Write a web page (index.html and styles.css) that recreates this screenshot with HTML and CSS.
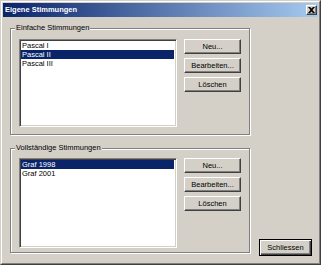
FILE: index.html
```html
<!DOCTYPE html>
<html lang="de">
<head>
<meta charset="utf-8">
<title>Eigene Stimmungen</title>
<link rel="stylesheet" href="styles.css">
</head>
<body>
<div class="window">
  <div class="frame">
    <div class="titlebar">
      <span class="title">Eigene Stimmungen</span>
      <span class="close"><svg width="7" height="6" viewBox="0 0 7 6"><path d="M0 0h2l1.5 1.5L5 0h2L4.5 3 7 6H5L3.5 4.5 2 6H0l2.5-3z" fill="#000"/></svg></span>
    </div>
    <div class="content">
      <div class="groups">
        <div class="group g1">
          <span class="legend">Einfache Stimmungen</span>
          <div class="list l1">
            <div class="item">Pascal I</div>
            <div class="item sel">Pascal II</div>
            <div class="item">Pascal III</div>
          </div>
          <div class="buttons">
            <button class="btn">Neu...</button>
            <button class="btn">Bearbeiten...</button>
            <button class="btn">Löschen</button>
          </div>
        </div>
        <div class="group g2">
          <span class="legend">Vollständige Stimmungen</span>
          <div class="list l2">
            <div class="item sel">Graf 1998</div>
            <div class="item">Graf 2001</div>
          </div>
          <div class="buttons">
            <button class="btn">Neu...</button>
            <button class="btn">Bearbeiten...</button>
            <button class="btn">Löschen</button>
          </div>
        </div>
      </div>
      <div class="footer">
        <button class="btn default">Schliessen</button>
      </div>
    </div>
  </div>
</div>
</body>
</html>
```

FILE: styles.css
```css
html, body {
  margin: 0;
  padding: 0;
  background: #d4d0c8;
  font-family: "Liberation Sans", Arial, sans-serif;
  font-size: 7.5px;
  color: #000;
}

.window {
  width: 321px;
  height: 265px;
  box-sizing: border-box;
  border: 1px solid;
  border-color: #d4d0c8 #404040 #404040 #d4d0c8;
}

.frame {
  height: 100%;
  box-sizing: border-box;
  border: 1px solid;
  border-color: #fff #808080 #808080 #fff;
  padding: 1px;
  display: flex;
  flex-direction: column;
}

.titlebar {
  height: 14px;
  flex: none;
  display: flex;
  align-items: center;
  justify-content: space-between;
  padding: 0 1px 0 2px;
  background: linear-gradient(to right, #0a246a, #a6caf0);
}

.title {
  color: #fff;
  font-weight: bold;
  line-height: 10px;
}

.close {
  width: 11px;
  height: 10px;
  box-sizing: border-box;
  display: flex;
  align-items: center;
  justify-content: center;
  background: #d4d0c8;
  border: 1px solid;
  border-color: #fff #404040 #404040 #fff;
  box-shadow: inset -1px -1px #808080;
}

.close svg {
  display: block;
}

.content {
  flex: 1;
  display: flex;
  padding: 11px 0 0 7px;
}

.groups {
  display: flex;
  flex-direction: column;
}

.group {
  position: relative;
  width: 240px;
  box-sizing: border-box;
  display: flex;
  border: 1px solid #808080;
  box-shadow: inset 1px 1px #fff, 1px 1px #fff;
}

.g1 {
  padding: 10px 8px 7px 8px;
}

.g2 {
  margin-top: 13px;
  padding: 9px 8px 4px 8px;
}

.legend {
  position: absolute;
  top: -6px;
  left: 4px;
  padding: 0 1px;
  line-height: 10px;
  background: #d4d0c8;
}

.list {
  width: 158px;
  box-sizing: border-box;
  background: #fff;
  border: 1px solid;
  border-color: #808080 #fff #fff #808080;
  box-shadow: inset 1px 1px #404040, inset -1px -1px #d4d0c8;
  padding: 1px 2px 1px 1px;
}

.l1 { height: 88px; }
.l2 { height: 90px; }

.item {
  height: 9px;
  line-height: 9px;
  padding-left: 1px;
  white-space: nowrap;
}

.item.sel {
  background: #0a246a;
  color: #fff;
}

.buttons {
  margin-left: 7px;
  display: flex;
  flex-direction: column;
  gap: 4px;
}

.btn {
  width: 57px;
  height: 15px;
  padding: 0;
  margin: 0;
  font: inherit;
  color: #000;
  line-height: 10px;
  background: #d4d0c8;
  border: 1px solid;
  border-color: #fff #404040 #404040 #fff;
  box-shadow: inset -1px -1px #808080;
  text-align: center;
}

.footer {
  align-self: flex-end;
  margin: 0 0 6px 9px;
}

.btn.default {
  width: 53px;
  height: 17px;
  border: 1px solid #000;
  box-shadow: inset 1px 1px #fff, inset -1px -1px #404040, inset -2px -2px #808080;
}
```
